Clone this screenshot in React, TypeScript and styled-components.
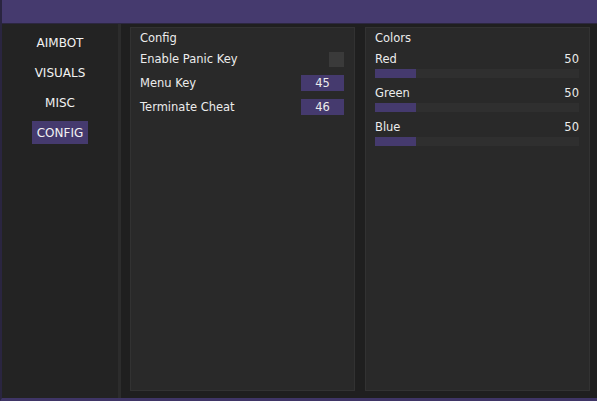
import React from "react";
import styled, { createGlobalStyle } from "styled-components";

const Global = createGlobalStyle`
  html, body { margin: 0; padding: 0; background: #1e1e1e; }
  * { box-sizing: border-box; }
`;

const Window = styled.div`
  width: 597px;
  height: 401px;
  background: #1f1f1f;
  display: flex;
  flex-direction: column;
  font-family: "DejaVu Sans", Verdana, sans-serif;
  font-size: 11.5px;
  color: #ececec;
  border-bottom: 3px solid #3f3566;
  border-left: 2px solid #2a2540;
`;

const TitleBar = styled.div`
  height: 24px;
  flex: none;
  background: #453a6e;
  border-bottom: 1px solid #2c2740;
`;

const Body = styled.div`
  flex: 1;
  display: flex;
  min-height: 0;
`;

const Sidebar = styled.div`
  width: 119px;
  flex: none;
  background: #232323;
  border-right: 3px solid #2c2c2c;
  display: flex;
  flex-direction: column;
  align-items: center;
  padding-top: 7px;
  gap: 7px;
`;

const NavItem = styled.div<{ $active?: boolean }>`
  height: 23px;
  padding: 0 5px;
  display: flex;
  align-items: center;
  font-size: 12px;
  background: ${(p) => (p.$active ? "#453a6e" : "transparent")};
  color: #f2f2f2;
`;

const Content = styled.div`
  flex: 1;
  display: flex;
  gap: 10px;
  padding: 3px 7px 7px 9px;
`;

const Panel = styled.div`
  flex: 1;
  background: #292929;
  border: 1px solid #323232;
  padding: 2px 10px 0 9px;
  display: flex;
  flex-direction: column;
`;

const PanelTitle = styled.div`
  height: 16px;
  display: flex;
  align-items: center;
`;

const Rows = styled.div`
  display: flex;
  flex-direction: column;
  margin-top: 1px;
`;

const Row = styled.div`
  height: 24px;
  display: flex;
  align-items: center;
  justify-content: space-between;
`;

const Checkbox = styled.div`
  width: 15px;
  height: 15px;
  background: #3a3a3a;
`;

const KeyBox = styled.div`
  width: 43px;
  height: 16px;
  background: #453a6e;
  display: flex;
  align-items: center;
  justify-content: center;
`;

const Sliders = styled.div`
  display: flex;
  flex-direction: column;
  gap: 8px;
  margin-top: 6px;
`;

const SliderBlock = styled.div`
  display: flex;
  flex-direction: column;
`;

const SliderHead = styled.div`
  height: 14px;
  display: flex;
  align-items: center;
  justify-content: space-between;
  margin-bottom: 3px;
`;

const Track = styled.div`
  height: 9px;
  background: #2f2f2f;
`;

const Fill = styled.div`
  height: 100%;
  background: #453a6e;
`;

const sliders = [
  { name: "Red", value: 50 },
  { name: "Green", value: 50 },
  { name: "Blue", value: 50 },
];

export default function App() {
  return (
    <>
      <Global />
      <Window>
        <TitleBar />
        <Body>
          <Sidebar>
            <NavItem>AIMBOT</NavItem>
            <NavItem>VISUALS</NavItem>
            <NavItem>MISC</NavItem>
            <NavItem $active>CONFIG</NavItem>
          </Sidebar>
          <Content>
            <Panel>
              <PanelTitle>Config</PanelTitle>
              <Rows>
                <Row>
                  <span>Enable Panic Key</span>
                  <Checkbox />
                </Row>
                <Row>
                  <span>Menu Key</span>
                  <KeyBox>45</KeyBox>
                </Row>
                <Row>
                  <span>Terminate Cheat</span>
                  <KeyBox>46</KeyBox>
                </Row>
              </Rows>
            </Panel>
            <Panel>
              <PanelTitle>Colors</PanelTitle>
              <Sliders>
                {sliders.map((s) => (
                  <SliderBlock key={s.name}>
                    <SliderHead>
                      <span>{s.name}</span>
                      <span>{s.value}</span>
                    </SliderHead>
                    <Track>
                      <Fill style={{ width: `${s.value / 2.5}%` }} />
                    </Track>
                  </SliderBlock>
                ))}
              </Sliders>
            </Panel>
          </Content>
        </Body>
      </Window>
    </>
  );
}
